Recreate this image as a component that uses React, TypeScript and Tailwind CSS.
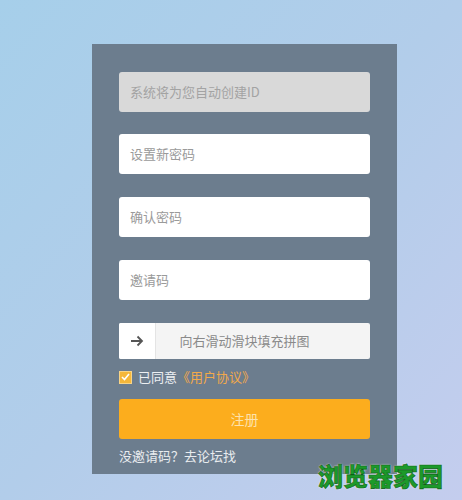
const cjk = "font-['Noto_Sans_CJK_SC','Noto_Sans',sans-serif]";

function Field({ label, disabled }: { label: string; disabled?: boolean }) {
  return (
    <div
      className={`h-[40px] rounded-[3px] flex items-center pl-[11px] text-[13px] ${
        disabled ? "bg-[#d9d9d9] text-[#a3a3a3]" : "bg-white text-[#9a9a9a]"
      }`}
    >
      {label}
    </div>
  );
}

export default function App() {
  return (
    <div
      className={`relative w-full h-[500px] overflow-hidden bg-gradient-to-br from-[#a6cfea] via-[#b2cdea] to-[#c4cdee] pt-[44px] pl-[92px] ${cjk}`}
    >
      <div className="w-[305px] h-[430px] bg-[#6c7d8e] px-[27px] pt-[28px] flex flex-col">
        <Field label="系统将为您自动创建ID" disabled />
        <div className="mt-[22px]">
          <Field label="设置新密码" />
        </div>
        <div className="mt-[23px]">
          <Field label="确认密码" />
        </div>
        <div className="mt-[23px]">
          <Field label="邀请码" />
        </div>

        <div className="mt-[23px] relative h-[36px] rounded-[2px] bg-[#f4f4f4] flex items-center justify-center text-[13px] text-[#8a8a8a]">
          <div className="absolute left-0 top-0 h-full w-[37px] bg-white border-r border-[#e4e4e4] rounded-l-[2px] flex items-center justify-center">
            <svg width="14" height="12" viewBox="0 0 14 12" fill="none">
              <path d="M1 6h11M7.5 1.5L12 6l-4.5 4.5" stroke="#555" strokeWidth="1.8" />
            </svg>
          </div>
          向右滑动滑块填充拼图
        </div>

        <div className="mt-[11px] h-[14px] flex items-center gap-[6px] text-[13px]">
          <span className="w-[13px] h-[13px] bg-[#f5b73a] border border-[#f8d487] flex items-center justify-center">
            <svg width="9" height="8" viewBox="0 0 9 8" fill="none">
              <path d="M1 4l2.5 2.5L8 1" stroke="white" strokeWidth="1.6" />
            </svg>
          </span>
          <span className="text-[#eceff2]">
            已同意<span className="text-[#f2a94a]">《用户协议》</span>
          </span>
        </div>

        <div className="mt-[15px] h-[40px] rounded-[3px] bg-[#fcad1d] flex items-center justify-center text-[14px] text-[#fde3ae]">
          注册
        </div>

        <div className="mt-[7px] leading-[20px] text-[13px] text-[#e9ecef]">没邀请码？去论坛找</div>
      </div>

      <div className="absolute left-[318px] top-[461px] text-[25px] leading-[28px] font-black text-[#1c9a2a] [-webkit-text-stroke:0.6px_#0d5e18] [text-shadow:0_0_2px_#fff,0_0_1px_#fff]">
        浏览器家园
      </div>
    </div>
  );
}
